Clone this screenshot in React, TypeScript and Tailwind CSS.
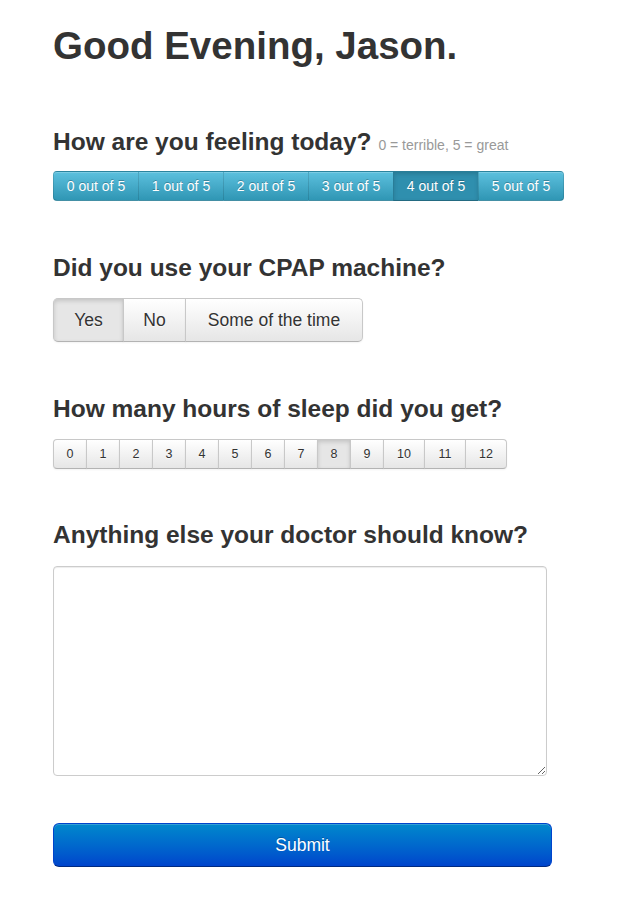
import { useState } from "react";

const FEEL = [0, 1, 2, 3, 4, 5];
const HOURS = [0, 1, 2, 3, 4, 5, 6, 7, 8, 9, 10, 11, 12];
const CPAP = [
  { label: "Yes", w: "w-[71px]" },
  { label: "No", w: "w-[63px]" },
  { label: "Some of the time", w: "w-[178px]" },
];

function edge(i: number, n: number, r: string) {
  if (i === 0) return r === "lg" ? "rounded-l-[5px]" : "rounded-l-[4px]";
  if (i === n - 1) return r === "lg" ? "rounded-r-[5px] -ml-px" : "rounded-r-[4px] -ml-px";
  return "-ml-px";
}

export default function App() {
  const [feel, setFeel] = useState(4);
  const [cpap, setCpap] = useState("Yes");
  const [hours, setHours] = useState(8);

  const heading = "text-[24.5px] leading-[40px] font-bold text-[#333]";
  const plain =
    "border border-[#c8c8c8] border-b-[#b3b3b3] text-[#333] [text-shadow:0_1px_1px_rgba(255,255,255,0.75)] shadow-[inset_0_1px_0_rgba(255,255,255,0.2),0_1px_2px_rgba(0,0,0,0.05)]";
  const plainOff = "bg-linear-to-b from-white to-[#e6e6e6]";
  const plainOn = "bg-[#e6e6e6] shadow-[inset_0_2px_4px_rgba(0,0,0,0.15),0_1px_2px_rgba(0,0,0,0.05)]";

  return (
    <div className="min-h-screen bg-white pl-[53px] pt-[26px] font-['Liberation_Sans',Arial,sans-serif] text-[#333]">
      <h1 className="text-[38.5px] leading-[40px] font-bold">Good Evening, Jason.</h1>

      <h3 className={`mt-[56px] ${heading}`}>
        How are you feeling today?{" "}
        <span className="text-[14px] leading-none font-normal text-[#999]">0 = terrible, 5 = great</span>
      </h3>
      <div className="mt-[9px] flex">
        {FEEL.map((n, i) => (
          <button
            key={n}
            onClick={() => setFeel(n)}
            className={`h-[30px] w-[86px] border border-[rgba(0,0,0,0.12)] border-b-[rgba(0,0,0,0.25)] text-[14px] leading-[20px] text-white [text-shadow:0_-1px_0_rgba(0,0,0,0.25)] ${edge(i, FEEL.length, "sm")} ${
              feel === n
                ? "bg-[#2f8fae] shadow-[inset_0_2px_4px_rgba(0,0,0,0.15)]"
                : "bg-linear-to-b from-[#5bc0de] to-[#2f96b4] shadow-[inset_0_1px_0_rgba(255,255,255,0.2)]"
            }`}
          >
            {n} out of 5
          </button>
        ))}
      </div>

      <h3 className={`mt-[47px] ${heading}`}>Did you use your CPAP machine?</h3>
      <div className="mt-[10px] flex">
        {CPAP.map((c, i) => (
          <button
            key={c.label}
            onClick={() => setCpap(c.label)}
            className={`h-[44px] ${c.w} text-[17.5px] leading-[20px] ${plain} ${edge(i, CPAP.length, "lg")} ${
              cpap === c.label ? plainOn : plainOff
            }`}
          >
            {c.label}
          </button>
        ))}
      </div>

      <h3 className={`mt-[47px] ${heading}`}>How many hours of sleep did you get?</h3>
      <div className="mt-[10px] flex">
        {HOURS.map((h, i) => (
          <button
            key={h}
            onClick={() => setHours(h)}
            className={`h-[30px] ${h > 9 ? "w-[42px]" : "w-[34px]"} text-[12.5px] leading-[18px] ${plain} ${edge(i, HOURS.length, "sm")} ${
              hours === h ? plainOn : plainOff
            }`}
          >
            {h}
          </button>
        ))}
      </div>

      <h3 className={`mt-[46px] ${heading}`}>Anything else your doctor should know?</h3>
      <textarea className="mt-[11px] block h-[210px] w-[494px] rounded-[4px] border border-[#ccc] px-[6px] py-[4px] text-[14px] shadow-[inset_0_1px_1px_rgba(0,0,0,0.075)] outline-none" />

      <button className="mt-[47px] mb-[40px] block h-[44px] w-[499px] rounded-[6px] border border-[#0044cc] border-b-[#002a80] bg-linear-to-b from-[#0088cc] to-[#0044cc] text-[17.5px] leading-[20px] text-white [text-shadow:0_-1px_0_rgba(0,0,0,0.25)] shadow-[inset_0_1px_0_rgba(255,255,255,0.2)]">
        Submit
      </button>
    </div>
  );
}
